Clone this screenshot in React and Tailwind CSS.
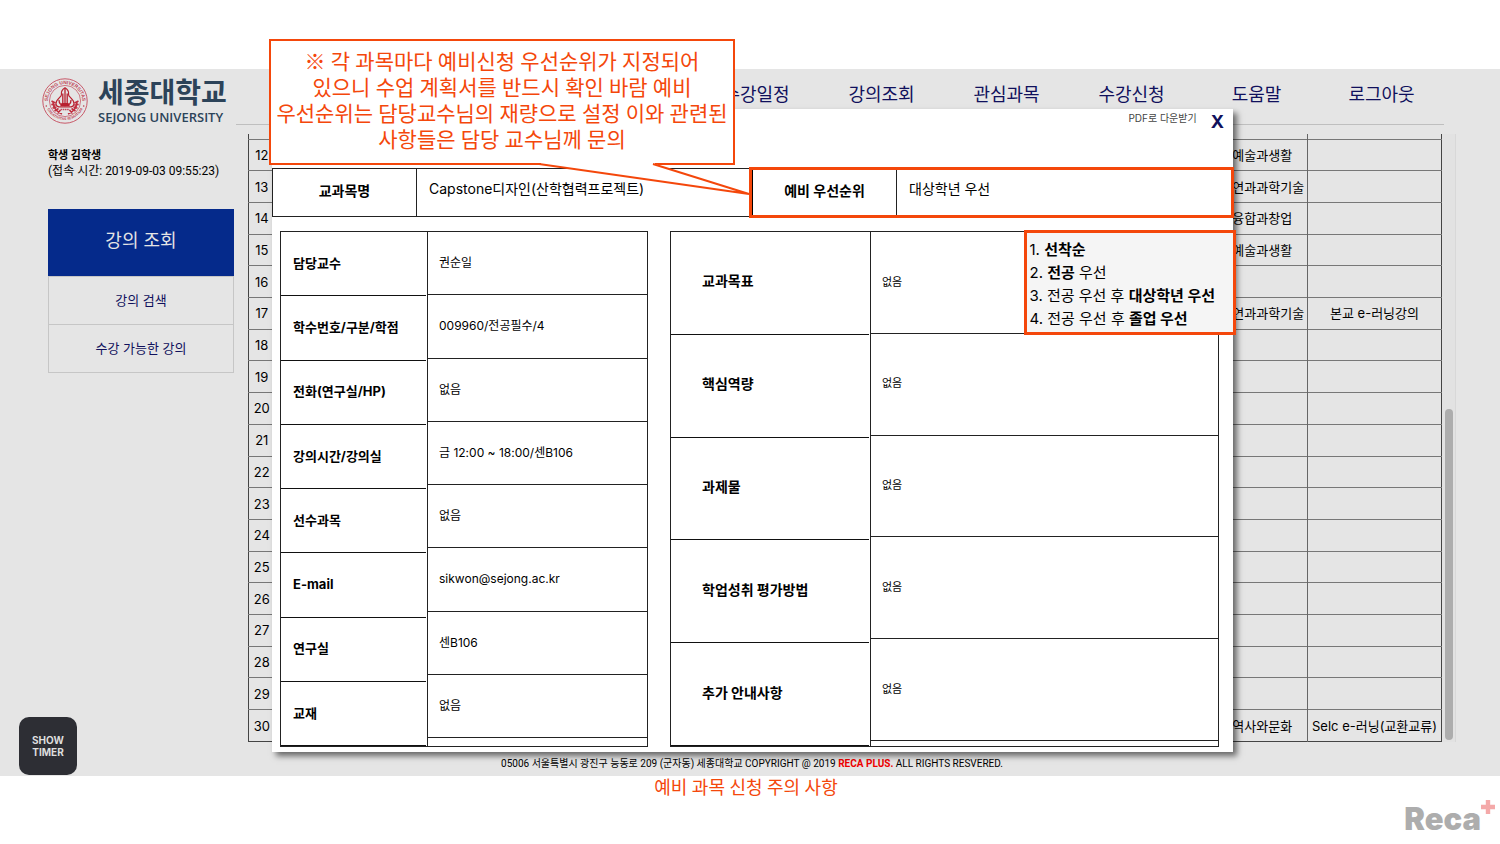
import React from "react";

const NAV_ITEMS = ["수강일정", "강의조회", "관심과목", "수강신청", "도움말", "로그아웃"];

const COURSE_ROWS = [
  { no: 12, area: "예술과생활" },
  { no: 13, area: "자연과과학기술" },
  { no: 14, area: "융합과창업" },
  { no: 15, area: "예술과생활" },
  { no: 16 },
  { no: 17, area: "자연과과학기술", type: "본교 e-러닝강의" },
  { no: 18 },
  { no: 19 },
  { no: 20 },
  { no: 21 },
  { no: 22 },
  { no: 23 },
  { no: 24 },
  { no: 25 },
  { no: 26 },
  { no: 27 },
  { no: 28 },
  { no: 29 },
  { no: 30, area: "역사와문화", type: "Selc e-러닝(교환교류)" },
];

const COURSE_INFO = [
  ["담당교수", "권순일"],
  ["학수번호/구분/학점", "009960/전공필수/4"],
  ["전화(연구실/HP)", "없음"],
  ["강의시간/강의실", "금 12:00 ~ 18:00/센B106"],
  ["선수과목", "없음"],
  ["E-mail", "sikwon@sejong.ac.kr"],
  ["연구실", "센B106"],
  ["교재", "없음"],
];

const COURSE_DETAILS = [
  ["교과목표", "없음"],
  ["핵심역량", "없음"],
  ["과제물", "없음"],
  ["학업성취 평가방법", "없음"],
  ["추가 안내사항", "없음"],
];

function Emblem() {
  return (
    <svg className="h-[46px] w-[46px] shrink-0" viewBox="0 0 46 46" fill="none" aria-hidden="true">
      <defs>
        <path id="seal-top" d="M6.200 27 A17.200 17.200 0 1 1 39.800 27" />
        <path id="seal-bottom" d="M5 30.500 A19.800 19.800 0 0 0 41 30.500" />
      </defs>
      <circle cx="23" cy="23" r="22.200" stroke="#c4485a" strokeWidth="0.9" />
      <circle cx="23" cy="23" r="15.600" stroke="#c4485a" strokeWidth="0.7" />
      <text className="font-['Liberation_Sans'] font-bold" fontSize="4.8" fill="#c04355">
        <textPath href="#seal-top" startOffset="50%" textAnchor="middle">SEJONG UNIVERSITAS</textPath>
      </text>
      <text className="font-['Liberation_Sans'] font-bold" fontSize="3.6" fill="#c04355">
        <textPath href="#seal-bottom" startOffset="50%" textAnchor="middle">CREATIVITAS SERVITIUM</textPath>
      </text>
      <circle cx="4.300" cy="28" r="0.800" fill="#b8384b" />
      <circle cx="41.700" cy="28" r="0.800" fill="#b8384b" />
      <path
        d="M9.500 23l4 2M9.300 26.500l4.500.5M10.500 30l4-1M12.500 33l4-2.500M15.500 35.500l3-3.500M36.500 23l-4 2M36.700 26.500l-4.500.5M35.500 30l-4-1M33.500 33l-4-2.500M30.500 35.500l-3-3.500M11 24.500c.5 5 4 9.500 9 11.500M35 24.500c-.5 5-4 9.500-9 11.500"
        stroke="#c02f40"
        strokeWidth="1.600"
      />
      <path
        d="M23 9.800c-3 1.600-4 4-3.600 7 .3 2-5.400 4.400-5.400 8.600 0 2.600 2.500 3.600 5 3.600h8c2.500 0 5-1 5-3.600 0-4.200-5.700-6.600-5.400-8.600.4-3-.6-5.400-3.600-7z"
        fill="#e5e5e5"
        stroke="#b8202f"
        strokeWidth="1.200"
      />
      <path
        d="M23 10v18M20.800 15.500v10M25.200 15.500v10M17 22c0 3.500 2.500 5.500 6 5.500s6-2 6-5.500"
        stroke="#b8202f"
        strokeWidth="1.300"
      />
      <path d="M19.500 25h7l1.500 3.500h-10z" fill="#b8202f" />
      <path d="M18.500 31.500h9" stroke="#c4485a" strokeWidth="1.600" strokeDasharray="1.600 0.600" />
    </svg>
  );
}

function Header() {
  return (
    <header className="relative flex h-14 items-start justify-between pl-[42px] pr-14">
      <a href="#home" className="flex items-center gap-[10px] pt-2">
        <Emblem />
        <span className="flex flex-col text-[#2c4359]">
          <span className="text-[28px] font-bold leading-8">세종대학교</span>
          <span className="font-['Open_Sans'] text-[13px] font-semibold leading-4">SEJONG UNIVERSITY</span>
        </span>
      </a>
      <nav className="grid w-[750px] grid-cols-6 pt-[14px] text-center text-lg leading-6 text-[#10105c]">
        {NAV_ITEMS.map((item) => (
          <a key={item} href={"#" + item}>
            {item}
          </a>
        ))}
      </nav>
      <span className="absolute bottom-0 left-[236px] right-14 border-b border-[#bfbfbf]" />
    </header>
  );
}

function Sidebar() {
  return (
    <aside className="w-[248px] shrink-0 pl-12 pr-[14px] pt-[22px]">
      <p className="text-[11px] font-bold leading-4">학생 김학생</p>
      <p className="whitespace-nowrap font-[Roboto,'Noto_Sans_CJK_KR',sans-serif] text-xs leading-4">
        (접속 시간: 2019-09-03 09:55:23)
      </p>
      <div className="mt-[30px] text-center text-[13px] text-[#10105c]">
        <a href="#lectures" className="flex h-[67px] items-center justify-center bg-[#052a8b] pb-1 text-lg text-[#e5e5e5]">
          강의 조회
        </a>
        <a href="#search" className="flex h-[49px] items-center justify-center border border-[#c6c6c6]">
          강의 검색
        </a>
        <a href="#available" className="flex h-12 items-center justify-center border border-t-0 border-[#c6c6c6]">
          수강 가능한 강의
        </a>
      </div>
    </aside>
  );
}

function CourseTable() {
  return (
    <table className="h-[608px] min-w-0 flex-1 table-fixed border-collapse border-x border-b border-[#444] text-center text-[13px] leading-5">
      <colgroup>
        <col className="w-[26px]" />
        <col />
        <col className="w-[90px]" />
        <col className="w-[134px]" />
      </colgroup>
      <tbody>
        <tr className="h-[5px]">
          <td />
          <td />
          <td />
          <td className="border-l border-[#666]" />
        </tr>
        {COURSE_ROWS.map((row) => (
          <tr key={row.no} className="border-t border-[#777]">
            <td className="p-0">{row.no}</td>
            <td className="p-0" />
            <td className="whitespace-nowrap p-0">{row.area}</td>
            <td className="whitespace-nowrap border-l border-[#666] p-0">{row.type}</td>
          </tr>
        ))}
      </tbody>
    </table>
  );
}

function InfoPanel({ rows, labelWidth, labelClass, valueClass, valuePad }) {
  return (
    <div className="flex h-full border border-[#222]">
      <div className={"flex shrink-0 flex-col pr-px font-bold " + labelWidth}>
        {rows.map(([label]) => (
          <div key={label} className={"flex flex-1 items-center border-b border-[#111] " + labelClass}>
            {label}
          </div>
        ))}
      </div>
      <div className={"flex flex-1 flex-col border-l border-[#222] " + valuePad}>
        {rows.map(([label, value]) => (
          <div key={label} className={"flex flex-1 items-center border-b border-[#222] pl-[11px] " + valueClass}>
            {value}
          </div>
        ))}
      </div>
    </div>
  );
}

function SyllabusDialog() {
  return (
    <div
      role="dialog"
      aria-label="수업 계획서"
      className="absolute bottom-6 left-[272px] right-[267px] top-10 flex flex-col bg-white text-black shadow-[4px_4px_6px_rgba(0,0,0,0.55)]"
    >
      <div className="flex h-[59px] items-start justify-end gap-[14px] pr-[9px]">
        <a href="#pdf" className="pt-px text-[10px] leading-4 text-[#444]">
          PDF로 다운받기
        </a>
        <button type="button" aria-label="닫기" className="pt-px text-lg font-bold leading-6 text-[#10105c]">
          X
        </button>
      </div>
      <div className="grid h-[49px] grid-cols-[478fr_483fr] text-sm">
        <div className="flex border border-r-0 border-[#222]">
          <div className="flex w-36 items-center justify-center border-r border-[#222] pb-1 font-bold">교과목명</div>
          <div className="flex items-center pb-2 pl-3">Capstone디자인(산학협력프로젝트)</div>
        </div>
        <div className="flex border-l-[3px] border-black outline-3 -outline-offset-2 outline-[#f4470b]">
          <div className="flex w-36 items-center justify-center border-r border-[#222] pb-1 font-bold">예비 우선순위</div>
          <div className="flex items-center pb-2 pl-3">대상학년 우선</div>
        </div>
      </div>
      <div className="flex min-h-0 flex-1 gap-[22px] pb-[5px] pl-2 pr-[14px] pt-[14px]">
        <div className="w-[368px]">
          <InfoPanel
            rows={COURSE_INFO}
            labelWidth="w-[146px]"
            labelClass="pl-3 text-[13px]"
            valueClass="text-xs"
            valuePad="pb-2"
          />
        </div>
        <div className="flex-1">
          <InfoPanel
            rows={COURSE_DETAILS}
            labelWidth="w-[199px]"
            labelClass="pb-[3px] pl-[31px] text-sm"
            valueClass="pb-px text-[11px]"
            valuePad="pb-[5px]"
          />
        </div>
      </div>
      <ol className="absolute -right-[3px] top-[121px] border-3 border-[#f4470b] bg-[#f5f5f5] pb-[2px] pl-[3px] pr-[18px] pt-[5px] text-[15px] leading-[23px]">
        <li>
          1. <b>선착순</b>
        </li>
        <li>
          2. <b>전공</b> 우선
        </li>
        <li>
          3. 전공 우선 후 <b>대상학년 우선</b>
        </li>
        <li>
          4. 전공 우선 후 <b>졸업 우선</b>
        </li>
      </ol>
    </div>
  );
}

function Callout() {
  return (
    <div className="absolute -top-[30px] left-[269px] h-[126px] w-[466px] border-2 border-[#f4470b] bg-white pt-2 text-center font-[Roboto,'Noto_Sans_CJK_KR',sans-serif] text-[21px] leading-[26px] text-[#f4470b]">
      ※ 각 과목마다 예비신청 우선순위가 지정되어
      <br />
      있으니 수업 계획서를 반드시 확인 바람 예비
      <br />
      우선순위는 담당교수님의 재량으로 설정 이와 관련된
      <br />
      사항들은 담당 교수님께 문의
      <svg className="absolute left-[268px] top-[121px] h-9 w-[214px]" viewBox="0 0 214 36" aria-hidden="true">
        <path d="M2 0V2L210 32L116 2V0z" fill="#fff" />
        <path d="M0 2L210 32L114 2" fill="none" stroke="#f4470b" strokeWidth="2" />
      </svg>
    </div>
  );
}

export default function App() {
  return (
    <div className="flex min-h-screen flex-col bg-white pt-[69px] font-[Inter,'Noto_Sans_CJK_KR',sans-serif] text-black">
      <main className="relative bg-[#e5e5e5]">
        <Header />
        <div className="flex">
          <Sidebar />
          <div className="flex flex-1 pr-11 pt-[9px]">
            <CourseTable />
            <div className="flex w-[14px] flex-col items-center justify-end border-r border-[#d8d8d8] bg-[#e2e2e2] pb-[2px]">
              <div className="h-[331px] w-2 rounded-full bg-[#adadad]" />
            </div>
          </div>
        </div>
        <footer className="flex h-[34px] items-center justify-center pl-1 pt-[10px] font-[Roboto,'Noto_Sans_CJK_KR',sans-serif] text-[10px] leading-4">
          <p>
            05006 서울특별시 광진구 능동로 209 (군자동) 세종대학교 COPYRIGHT @ 2019{" "}
            <b className="text-[#ee0000]">RECA PLUS.</b> ALL RIGHTS RESVERED.
          </p>
        </footer>
        <SyllabusDialog />
        <Callout />
        <button
          type="button"
          className="absolute bottom-px left-[19px] h-[58px] w-[58px] rounded-[10px] bg-[#2d2e34] text-[10px] font-bold leading-3 text-[#dedede]"
        >
          SHOW
          <br />
          TIMER
        </button>
      </main>
      <div className="grid grid-cols-[1fr_auto_1fr] pr-2">
        <p className="col-start-2 font-[Roboto,'Noto_Sans_CJK_KR',sans-serif] text-lg leading-6 text-[#f4470b]">
          예비 과목 신청 주의 사항
        </p>
        <div className="-mr-[3px] flex items-start justify-self-end pt-6">
          <span className="pt-[3px] text-[31px] font-black leading-8 text-[#adadad]">Reca</span>
          <svg className="h-[14px] w-[14px]" viewBox="0 0 14 14" aria-hidden="true">
            <path d="M4.800 0h4.400v4.800H14v4.400H9.200V14H4.800V9.200H0V4.800h4.800z" fill="#f4a9a9" />
          </svg>
        </div>
      </div>
    </div>
  );
}
